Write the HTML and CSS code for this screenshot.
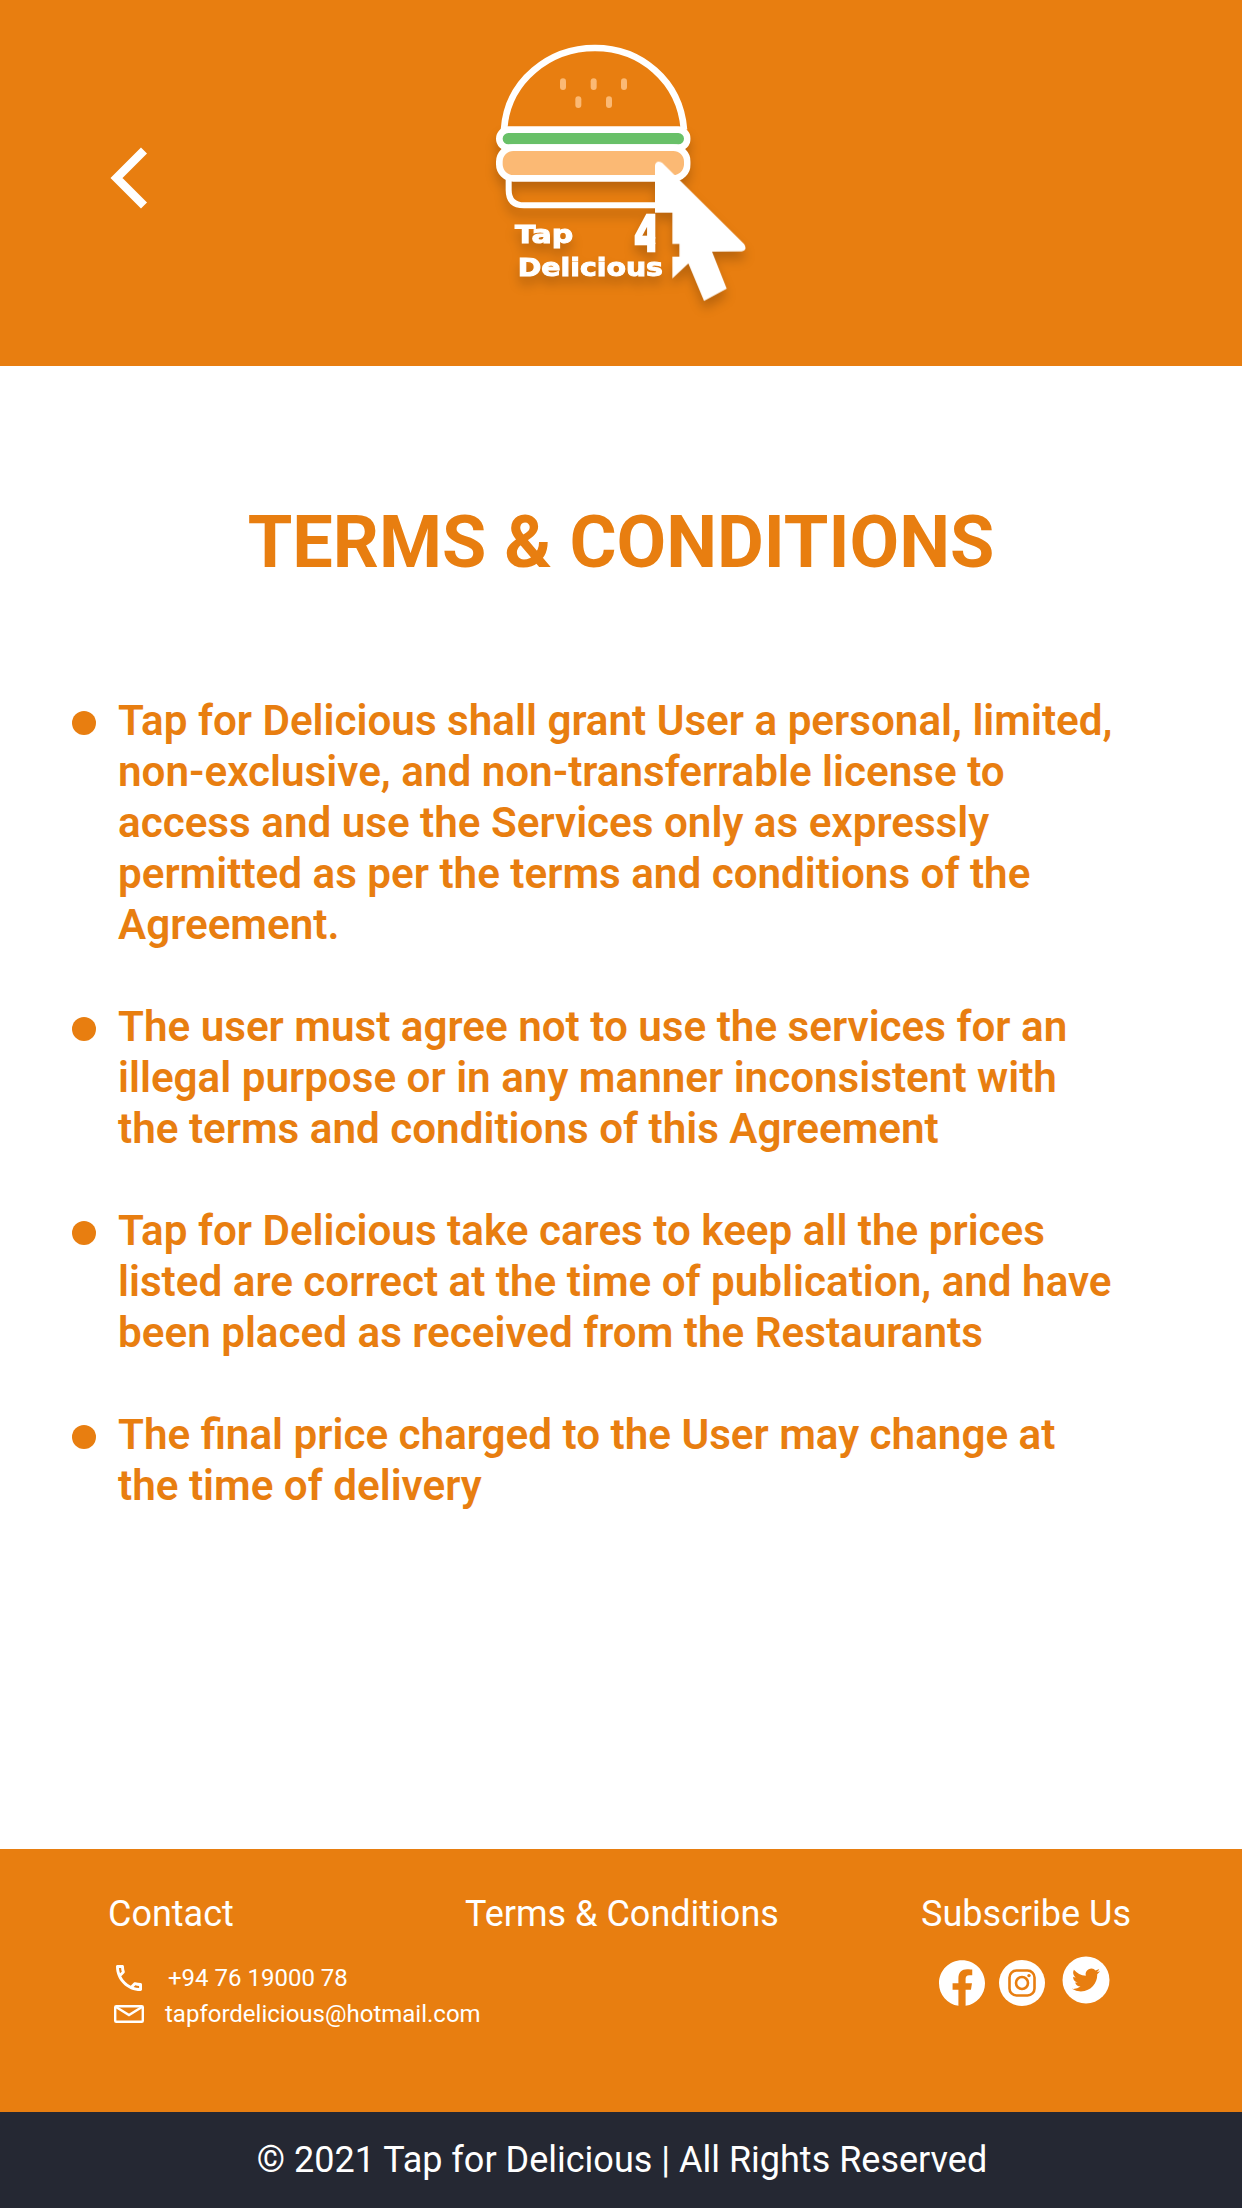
FILE: index.html
```html
<!DOCTYPE html>
<html lang="en">
<head>
    <meta charset="UTF-8">
    <meta name="viewport" content="width=device-width, initial-scale=1.0">
    <title>Terms &amp; Conditions - Tap for Delicious</title>
    <link rel="stylesheet" href="styles.css">
</head>
<body>
    <header class="top-bar">
        <a class="back-link" href="#" aria-label="Back">
            <svg width="48" height="70" viewBox="0 0 48 70" fill="none" stroke="#fff" stroke-width="8.5">
                <polyline points="41,7.5 13.5,35 41,62.5"/>
            </svg>
        </a>
        <svg class="logo" width="360" height="300" viewBox="0 0 1080 900">
            <defs>
                <clipPath id="four-clip"><rect x="630" y="570" width="76" height="130"/></clipPath>
            </defs>
            <path d="M252,329 C262,180 390,84 525,84 C660,84 780,180 792,329" fill="none" stroke="#fff" stroke-width="20"/>
            <g fill="#fbb974">
                <rect x="420" y="175" width="18" height="35" rx="9"/>
                <rect x="512" y="175" width="18" height="35" rx="9"/>
                <rect x="603" y="175" width="18" height="35" rx="9"/>
                <rect x="466" y="229" width="18" height="35" rx="9"/>
                <rect x="558" y="229" width="18" height="35" rx="9"/>
            </g>
            <g class="logo-art">
                <rect x="238" y="329" width="564" height="54" rx="27" fill="#68c068" stroke="#fff" stroke-width="20"/>
                <path d="M266,470 V510 Q266,556 312,556 H720" fill="none" stroke="#fff" stroke-width="18"/>
                <rect x="238" y="383" width="564" height="92" rx="42" fill="#fbb974" stroke="#fff" stroke-width="20"/>
                <text class="logo-text" x="285" y="668" textLength="175" lengthAdjust="spacingAndGlyphs" font-size="76">Tap</text>
                <text class="logo-text" x="293" y="767" textLength="436" lengthAdjust="spacingAndGlyphs" font-size="76">Delicious</text>
                <text class="logo-text logo-four" x="642" y="692" textLength="80" lengthAdjust="spacingAndGlyphs" clip-path="url(#four-clip)" font-size="150">4</text>
                <path d="M705,436 Q708,420 726,428 L972,672 Q984,690 964,694 L876,695 L920,806 L852,843 L805,730 L757,775 L757,710 L778,710 L778,672 L757,672 L757,578 L705,578 Z" fill="#fff"/>
            </g>
        </svg>
    </header>

    <main class="content">
        <h1 class="page-title">TERMS &amp; CONDITIONS</h1>
        <ul class="terms">
            <li class="term">Tap for Delicious shall grant User a personal, limited, non-exclusive, and non-transferrable license to access and use the Services only as expressly permitted as per the terms and conditions of the Agreement.</li>
            <li class="term">The user must agree not to use the services for an illegal purpose or in any manner inconsistent with the terms and conditions of this Agreement</li>
            <li class="term">Tap for Delicious take cares to keep all the prices listed are correct at the time of publication, and have been placed as received from the Restaurants</li>
            <li class="term">The final price charged to the User may change at the time of delivery</li>
        </ul>
    </main>

    <footer>
        <div class="footer-links">
            <div class="footer-col">
                <h2 class="footer-title">Contact</h2>
                <div class="contact-row phone-row">
                    <svg width="26" height="26" viewBox="3 3 18 18" fill="#fff">
                        <path d="M6.54 5c.06.89.21 1.76.45 2.59l-1.2 1.2c-.41-1.2-.67-2.47-.76-3.79h1.51m9.86 12.02c.85.24 1.72.39 2.6.45v1.49c-1.32-.09-2.59-.35-3.8-.75l1.2-1.19M7.5 3H4c-.55 0-1 .45-1 1 0 9.39 7.61 17 17 17 .55 0 1-.45 1-1v-3.49c0-.55-.45-1-1-1-1.24 0-2.45-.2-3.57-.57-.1-.04-.21-.05-.31-.05-.26 0-.51.1-.71.29l-2.2 2.2c-2.83-1.45-5.15-3.76-6.59-6.59l2.2-2.2c.28-.28.36-.67.25-1.02C8.7 6.45 8.5 5.25 8.5 4c0-.55-.45-1-1-1z"/>
                    </svg>
                    <span>+94 76 19000 78</span>
                </div>
                <div class="contact-row mail-row">
                    <svg width="30" height="18" viewBox="0 0 30 18" fill="none" stroke="#fff" stroke-width="2.4">
                        <rect x="1.2" y="1.2" width="27.6" height="15.6" rx="1"/>
                        <polyline points="2,2 15,10 28,2"/>
                    </svg>
                    <span>tapfordelicious@hotmail.com</span>
                </div>
            </div>
            <div class="footer-col">
                <h2 class="footer-title">Terms &amp; Conditions</h2>
            </div>
            <div class="footer-col">
                <h2 class="footer-title">Subscribe Us</h2>
                <div class="social">
                    <svg width="46" height="46" viewBox="0 0 24 24" fill="#fff">
                        <path d="M24 12.073c0-6.627-5.373-12-12-12s-12 5.373-12 12c0 5.99 4.388 10.954 10.125 11.854v-8.385H7.078v-3.47h3.047V9.43c0-3.007 1.792-4.669 4.533-4.669 1.312 0 2.686.235 2.686.235v2.953H15.83c-1.491 0-1.956.925-1.956 1.874v2.25h3.328l-.532 3.47h-2.796v8.385C19.612 23.027 24 18.062 24 12.073z"/>
                    </svg>
                    <svg width="46" height="46" viewBox="0 0 46 46">
                        <circle cx="23" cy="23" r="23" fill="#fff"/>
                        <rect x="10.5" y="10.5" width="25" height="25" rx="7" fill="none" stroke="#e87e10" stroke-width="2.6"/>
                        <circle cx="23" cy="23" r="6" fill="none" stroke="#e87e10" stroke-width="2.6"/>
                        <circle cx="30" cy="15.6" r="1.7" fill="#e87e10"/>
                    </svg>
                    <svg class="twitter" width="48" height="48" viewBox="0 0 48 48">
                        <circle cx="24" cy="24" r="23.5" fill="#fff"/>
                        <g transform="translate(10 10) scale(1.17)">
                            <path fill="#e87e10" d="M23.953 4.57a10 10 0 01-2.825.775 4.958 4.958 0 002.163-2.723c-.951.555-2.005.959-3.127 1.184a4.92 4.92 0 00-8.384 4.482C7.69 8.095 4.067 6.13 1.64 3.162a4.822 4.822 0 00-.666 2.475c0 1.71.87 3.213 2.188 4.096a4.904 4.904 0 01-2.228-.616v.06a4.923 4.923 0 003.946 4.827 4.996 4.996 0 01-2.212.085 4.936 4.936 0 004.604 3.417 9.867 9.867 0 01-6.102 2.105c-.39 0-.779-.023-1.17-.067a13.995 13.995 0 007.557 2.209c9.053 0 13.998-7.496 13.998-13.985 0-.21 0-.42-.015-.63A9.935 9.935 0 0024 4.59z"/>
                        </g>
                    </svg>
                </div>
            </div>
        </div>
        <p class="copyright">© 2021 Tap for Delicious | All Rights Reserved</p>
    </footer>
</body>
</html>
```

FILE: styles.css
```css
body {
    font-family: Roboto, Arial, sans-serif;
    background-color: #fff;
    margin: 0;
    min-height: 2208px;
    display: flex;
    flex-direction: column;
}

.top-bar {
    background-color: #e87e10;
    height: 366px;
    box-sizing: border-box;
    padding: 20px 0 0 103px;
    display: flex;
    align-items: flex-start;
}

.back-link {
    display: block;
    margin-top: 123px;
    line-height: 0;
}

.logo {
    margin-left: 269px;
}

.logo-art {
    filter: drop-shadow(0 24px 16px rgba(0, 0, 0, 0.2));
}

.logo-text {
    font-family: "DejaVu Sans", sans-serif;
    font-weight: bold;
    fill: #fff;
    stroke: #fff;
    stroke-width: 3px;
}

.logo-four {
    stroke-width: 8px;
}

.content {
    flex: 1;
    color: #e87e10;
}

.page-title {
    margin: 137px 0 0;
    text-align: center;
    font-size: 72px;
    line-height: 80px;
    font-weight: bold;
}

.terms {
    list-style: none;
    margin: 112px 0 0;
    padding: 0 0 0 72px;
    width: 1050px;
}

.term {
    display: flex;
    gap: 22px;
    font-size: 42.2px;
    line-height: 51px;
    font-weight: 600;
    margin-bottom: 51px;
}

.term::before {
    content: "";
    flex: none;
    width: 24px;
    height: 24px;
    margin-top: 16px;
    border-radius: 50%;
    background-color: #e87e10;
}

footer {
    color: #fff;
}

.footer-links {
    background-color: #e87e10;
    height: 263px;
    box-sizing: border-box;
    padding: 45px 0 0 108px;
    display: grid;
    grid-template-columns: 357px 456px auto;
}

.footer-title {
    margin: 0;
    font-size: 36px;
    line-height: 41px;
    font-weight: 400;
}

.contact-row {
    display: flex;
    align-items: center;
    font-size: 24px;
    line-height: 36px;
}

.contact-row svg {
    flex: none;
}

.phone-row {
    gap: 26px;
    margin: 25px 0 0 8px;
}

.mail-row {
    gap: 21px;
    margin-left: 6px;
}

.social {
    display: flex;
    align-items: center;
    gap: 14px;
    margin: 25px 0 0 18px;
}

.twitter {
    margin: -6px 0 0 3px;
}

.copyright {
    margin: 0;
    height: 96px;
    background-color: #252833;
    text-align: center;
    font-size: 36px;
    line-height: 96px;
    padding-left: 2px;
}
```
